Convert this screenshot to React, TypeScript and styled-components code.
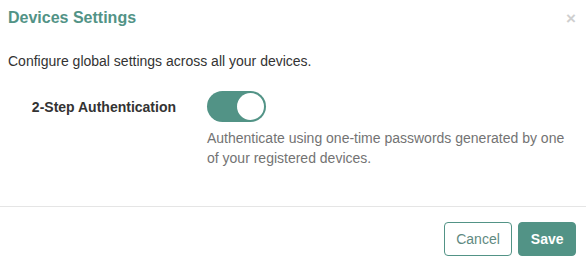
import styled, { createGlobalStyle } from "styled-components"

const Global = createGlobalStyle`
    html, body {
        margin: 0;
        padding: 0;
        background: #fff;
    }
    body {
        font-family: 'Liberation Sans', Arial, sans-serif;
        color: #333;
    }
`

const Modal = styled.div`
    width: 586px;
    height: 263px;
    display: flex;
    flex-direction: column;
    box-sizing: border-box;
`

const Header = styled.div`
    display: flex;
    align-items: center;
    justify-content: space-between;
    height: 36px;
    padding: 0 10px 0 8px;
`

const Title = styled.h4`
    margin: 0;
    font-size: 16px;
    font-weight: bold;
    color: #529386;
`

const Close = styled.button`
    border: 0;
    background: none;
    padding: 0;
    font-family: 'Liberation Sans', Arial, sans-serif;
    font-size: 17px;
    font-weight: bold;
    color: #cfcfcf;
    line-height: 1;
    cursor: pointer;
`

const Body = styled.div`
    padding: 15px 8px 0 8px;
    flex: 1;
`

const Intro = styled.p`
    margin: 0 0 20px;
    font-size: 14px;
    line-height: 20px;
`

const Row = styled.div`
    display: grid;
    grid-template-columns: 168px 1fr;
    column-gap: 31px;
`

const Label = styled.label`
    font-size: 14px;
    font-weight: bold;
    text-align: right;
    line-height: 20px;
    padding-top: 6px;
`

const Field = styled.div`
    display: flex;
    flex-direction: column;
    align-items: flex-start;
    gap: 6px;
`

const Toggle = styled.div<{ $on: boolean }>`
    width: 59px;
    height: 31px;
    border-radius: 16px;
    background: ${p => (p.$on ? "#529386" : "#ccc")};
    box-sizing: border-box;
    padding: 2px;
    display: flex;
    justify-content: ${p => (p.$on ? "flex-end" : "flex-start")};
`

const Knob = styled.span`
    width: 27px;
    height: 27px;
    border-radius: 50%;
    background: #fff;
`

const Help = styled.p`
    margin: 0;
    font-size: 14px;
    line-height: 20px;
    color: #737373;
`

const Footer = styled.div`
    border-top: 1px solid #e5e5e5;
    display: flex;
    justify-content: flex-end;
    gap: 6px;
    padding: 15px 10px 7px;
`

const Button = styled.button<{ $primary?: boolean }>`
    height: 34px;
    padding: 0 11.5px;
    border-radius: 4px;
    font-family: 'Liberation Sans', Arial, sans-serif;
    font-size: 14px;
    border: 1px solid #529386;
    background: ${p => (p.$primary ? "#529386" : "#fff")};
    color: ${p => (p.$primary ? "#fff" : "#5f8a81")};
    font-weight: ${p => (p.$primary ? "bold" : "normal")};
    cursor: pointer;
`

export default function App() {
    return (
        <Modal>
            <Global />
            <Header>
                <Title>Devices Settings</Title>
                <Close aria-label="Close">×</Close>
            </Header>
            <Body>
                <Intro>Configure global settings across all your devices.</Intro>
                <Row>
                    <Label>2-Step Authentication</Label>
                    <Field>
                        <Toggle $on={true}>
                            <Knob />
                        </Toggle>
                        <Help>
                            Authenticate using one-time passwords generated by one
                            <br />
                            of your registered devices.
                        </Help>
                    </Field>
                </Row>
            </Body>
            <Footer>
                <Button>Cancel</Button>
                <Button $primary>Save</Button>
            </Footer>
        </Modal>
    )
}
